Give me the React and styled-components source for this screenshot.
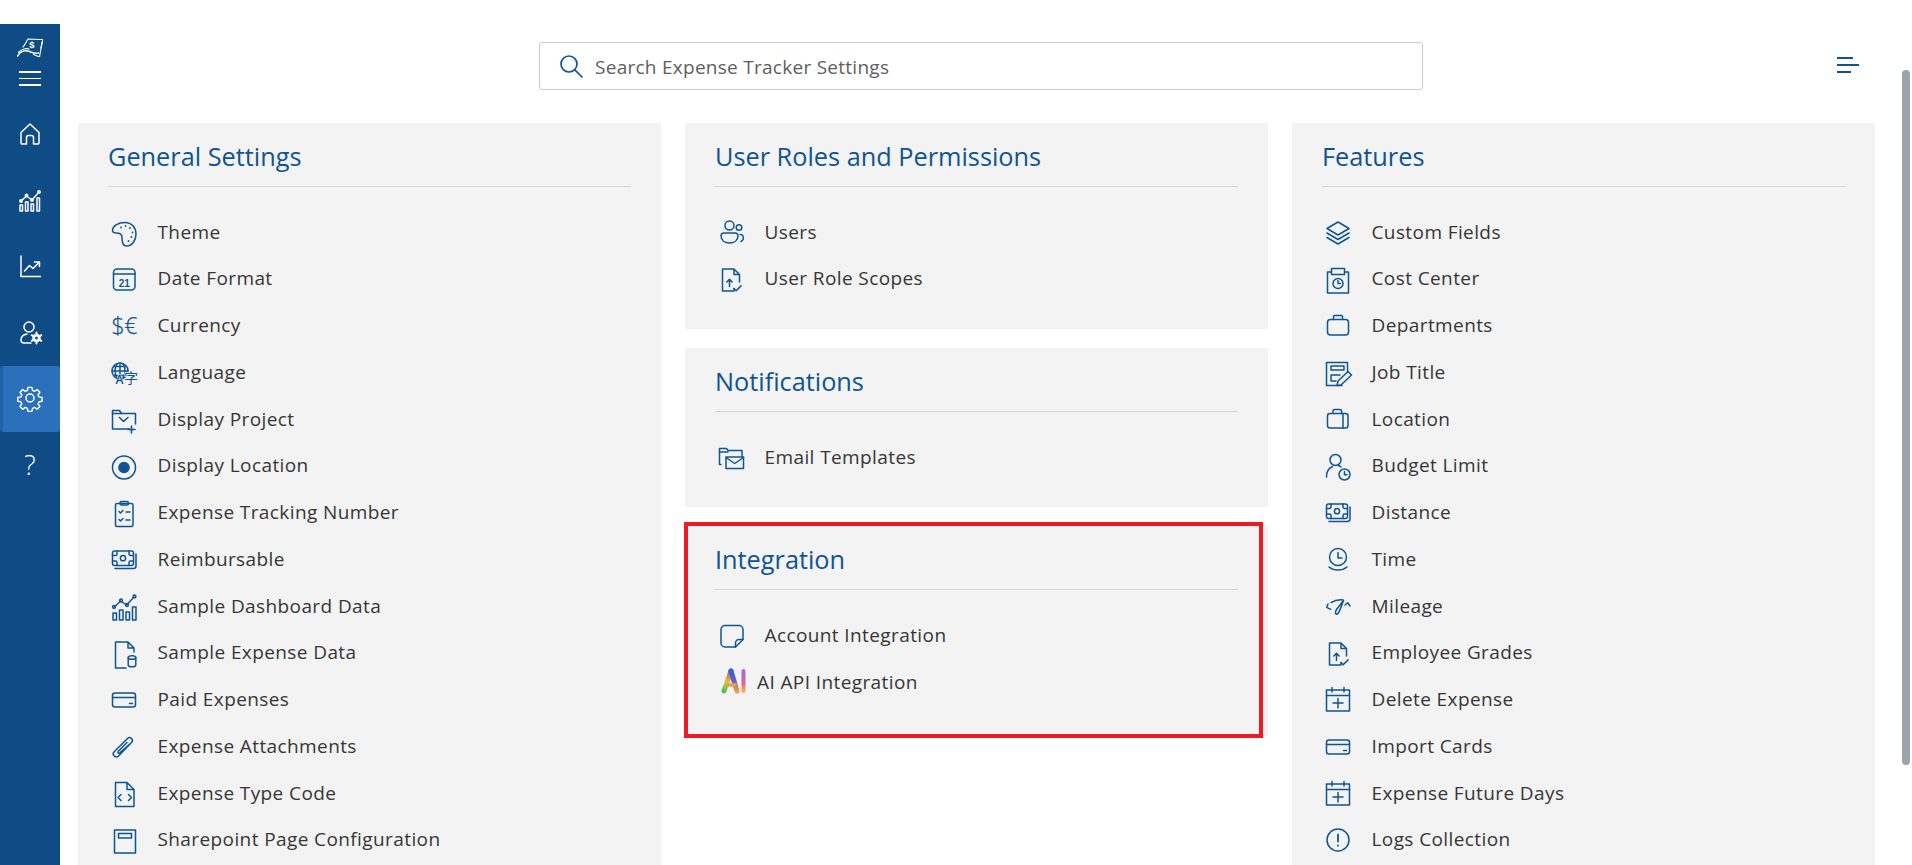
import React from 'react';
import styled, { createGlobalStyle } from 'styled-components';

const BLUE = '#0f5493';

const GlobalStyle = createGlobalStyle`
    html, body {
        margin: 0;
        padding: 0;
        height: 100%;
        background: #fff;
        overflow: hidden;
        font-family: "Open Sans", "Noto Sans", sans-serif;
    }
    * {
        box-sizing: border-box;
    }
`

// all list icons share a 32x32 box
const Svg = ({ children, size = 32, color = BLUE, width = 1.5 }) => (
    <svg width={size} height={size} viewBox="0 0 32 32" fill="none" stroke={color} strokeWidth={width} strokeLinecap="round" strokeLinejoin="round">
        {children}
    </svg>
);

const dots = (list, color = BLUE) => list.map(([x, y], i) => <circle key={i} cx={x} cy={y} r="0.9" fill={color} stroke="none" />);

const money = (
    <>
        <rect x="4.5" y="8" width="21" height="14.5" rx="2" />
        <path d="M28 11v12a2.5 2.5 0 0 1-2.5 2.5H7" />
        <circle cx="15" cy="15.2" r="2.6" />
        <path d="M4.5 12.5h3a1.5 1.5 0 0 0 1.5-1.5V8M25.5 12.5h-3A1.5 1.5 0 0 1 21 11V8M4.5 18h3A1.5 1.5 0 0 1 9 19.5v3M25.5 18h-3a1.5 1.5 0 0 0-1.5 1.5v3" />
    </>
);
const bars = (
    <>
        <path d="M5 30v-7h3.500v7zM11.500 30V20h3.500v10zM18 30v-8h3.500v8zM24.500 30V17H28v13z" />
        <path d="M6.500 17l6-6 6 4 7.500-8" />
        <circle cx="6" cy="17" r="1.400" />
        <circle cx="13" cy="10.500" r="1.400" />
        <circle cx="19" cy="15" r="1.400" />
        <circle cx="26.500" cy="6.500" r="1.400" />
    </>
);
const calendarPlus = (
    <>
        <rect x="4.500" y="7" width="23" height="21" />
        <path d="M4.500 12.500h23M10 4.500V9M22 4.500V9M16 15.500V25M11 20h10" />
    </>
);
const card = (
    <>
        <rect x="4.500" y="10" width="23" height="14" rx="2.500" />
        <path d="M4.500 14.500h23M21.500 20.500h3" />
    </>
);
const fileUp = (
    <>
        <path d="M19 25.500V28H7.500V6H19l5.500 5.500V19M19 6v5.500h5.500" />
        <path d="M14.500 23.500v-7M11.800 19l2.700-2.700 2.700 2.700M19 25.500l2.200 2.200 4.800-4.800" />
    </>
);

const icons = {
    palette: (
        <>
            <path d="M17 6.500C10 6.500 4.500 10 4.500 14.500c0 3.500 4 2.200 6.300 2.800s3.200 2 3.200 4.400.6 8.300 4.500 8.300c5.500 0 9.500-5.500 9.500-12S23.500 6.500 17 6.500z" />
            {dots([[13, 11.500], [17.500, 10], [22, 12], [24.500, 16.500], [23.500, 21], [20.500, 25]])}
        </>
    ),
    calendar: (
        <>
            <rect x="5.500" y="6" width="21.500" height="21" rx="3.500" />
            <path d="M5.500 11H27" />
            <text x="16.200" y="23.500" fontSize="10" fontWeight="700" fontFamily="Liberation Sans, sans-serif" fill={BLUE} stroke="none" textAnchor="middle">21</text>
        </>
    ),
    currency: (
        <text x="3.500" y="25" fontSize="23" letterSpacing="-0.5" fontWeight="300" fontFamily="Open Sans, sans-serif" fill={BLUE} stroke={BLUE} strokeWidth="0.25">$€</text>
    ),
    language: (
        <>
            <circle cx="12" cy="15" r="8" />
            <path d="M4 15h16M12 7v16M6 10.500h12M6 19.500h12M9 8c-2.500 4.500-2.500 10 0 14M15 8c2.500 4.500 2.500 10 0 14" />
            <text x="7.500" y="28" fontSize="12" fontWeight="600" fontFamily="Open Sans, sans-serif" fill={BLUE} stroke="#f3f3f3" strokeWidth="1" paintOrder="stroke">A</text>
            <text x="16" y="27" fontSize="14" fontFamily="Noto Sans CJK SC, sans-serif" fill={BLUE} stroke="#f3f3f3" strokeWidth="1.500" paintOrder="stroke">字</text>
        </>
    ),
    folder: (
        <>
            <path d="M27.500 21V10.500H13.500l-2-3h-7V26h17" />
            <path d="M4.500 10.500h9" />
            <path d="M11.500 14.500l4 4 4.500-4M23.500 23v7M20 26.500h7" strokeWidth="1.600" />
        </>
    ),
    target: (
        <>
            <circle cx="16" cy="17.500" r="11.500" strokeWidth="1.500" />
            <circle cx="16" cy="17.500" r="5.800" fill={BLUE} stroke="none" />
        </>
    ),
    clipboard: (
        <>
            <rect x="7.500" y="7.500" width="17.500" height="23" rx="1.500" />
            <rect x="12" y="5.500" width="8.500" height="3.500" rx="1.500" />
            <path d="M11 15.500l1.500 1.500 2.500-2.500M18 16h4M11 23.500l1.500 1.500 2.500-2.500M18 24h4" />
        </>
    ),
    money,
    bars,
    fileData: (
        <>
            <path d="M18 31H7.500V5H20l6 6v4M20 5v6h6" />
            <ellipse cx="24" cy="20.500" rx="3.800" ry="1.800" />
            <path d="M20.200 20.500V28c0 1 1.700 1.800 3.800 1.800s3.800-.8 3.800-1.800v-7.500" />
        </>
    ),
    card,
    clip: (
        <path d="M22.500 13.500L10.500 26a3 3 0 0 1-4.300-4.300L19.500 8.500a2.800 2.800 0 0 1 4 4L11.500 23a1 1 0 0 1-1.400-1.400L19 12.500" />
    ),
    fileCode: (
        <>
            <path d="M19 5.500H7.500v24H26v-17l-7-7zM19 5.500v7h7" />
            <path d="M13 17.500l-3 3 3 3M20.500 17.500l3 3-3 3" />
        </>
    ),
    page: (
        <>
            <rect x="6.500" y="6" width="21" height="23" />
            <rect x="10.500" y="9.500" width="13" height="4.500" />
        </>
    ),
    users: (
        <>
            <circle cx="14.500" cy="9.500" r="4.500" />
            <circle cx="24" cy="11.500" r="2.800" />
            <path d="M6 19.500A3 3 0 0 1 9 17h11a3 3 0 0 1 3 2.500c0 5-4 7.500-8.500 7.500S6 24.500 6 19.500z" />
            <path d="M26 25.500a4.500 4.500 0 0 0 2-5.500c-.4-1-1.500-1.500-3-1.500" />
        </>
    ),
    fileUp,
    mailFolder: (
        <>
            <path d="M6 23.500H4.500v-16h7l1.500 2h14v6" />
            <path d="M4.500 11H13" />
            <rect x="11" y="16" width="17.500" height="11.500" />
            <path d="M11 16.500l8.700 6 8.800-6" />
        </>
    ),
    note: (
        <>
            <path d="M20.500 28H10a4 4 0 0 1-4-4V10.500a4 4 0 0 1 4-4h14a4 4 0 0 1 4 4v10z" />
            <path d="M20.500 28v-4a3.500 3.500 0 0 1 3.500-3.500h4" />
        </>
    ),
    layers: (
        <>
            <path d="M16 6l11 6.500L16 19 5 12.500z" />
            <path d="M5 17l11 6.500L27 17M5 21.500L16 28l11-6.500" />
        </>
    ),
    costCenter: (
        <>
            <path d="M9 9H5.500v21h21V9H23" />
            <rect x="9.500" y="5.500" width="13" height="6" />
            <circle cx="16" cy="20.500" r="5" />
            <path d="M16 17.500v3h2.500" />
        </>
    ),
    briefcase: (
        <>
            <rect x="5.500" y="10.500" width="21" height="15.500" rx="3" />
            <path d="M11.500 10.500v-3a1 1 0 0 1 1-1h7a1 1 0 0 1 1 1v3" />
        </>
    ),
    jobTitle: (
        <>
            <path d="M20 29.500H4.500v-23h21v9" />
            <rect x="9" y="10" width="13" height="4" />
            <path d="M9 19h9M9 19v6h5" />
            <path d="M15 29.500l1-4.500 10-9.500 3.500 3.500L19 29z" />
        </>
    ),
    case: (
        <>
            <rect x="5.500" y="10.500" width="20.500" height="14.500" rx="2.500" />
            <path d="M11 10.500V8a1.500 1.500 0 0 1 1.500-1.500H18A1.500 1.500 0 0 1 19.500 8v2.500M21 10.500V25" />
        </>
    ),
    budget: (
        <>
            <circle cx="13.500" cy="10" r="5.500" />
            <path d="M4.500 27c0-5.500 2.500-9 6-10.500M16.500 15.500c1 .5 2 1 2.500 1.500" />
            <circle cx="22.500" cy="24.500" r="5.500" />
            <path d="M22.500 21.500v3.200H25" />
        </>
    ),
    time: (
        <>
            <circle cx="16" cy="14" r="8.500" />
            <path d="M16 9.500V15h4M7 24c5 4 13 4 18 0" />
        </>
    ),
    mileage: (
        <>
            <path d="M6 14l-1.300 3.300 4 2M9 12.700c4-2.500 8-3.200 12-2.700M23 15l2.700-2.300L28 16" />
            <path d="M21.500 10.500l-7 9c-2 3-1 5.500.8 4.500 1.500-.8 2-2.500 3-5z" />
        </>
    ),
    calendarPlus,
    alert: (
        <>
            <circle cx="16" cy="16" r="11" />
            <path d="M16 10.500v7M16 21.500v.3" strokeWidth="1.800" />
        </>
    ),
};

const SideLogo = () => (
    <svg width="26" height="20" viewBox="0 0 26 20" fill="none" stroke="#fff" strokeWidth="1.100" strokeLinecap="round" strokeLinejoin="round">
        <path d="M6 10c2-2 3-5 5-8 5 .2 10 .2 15 .5L24 11" />
        <path d="M25 5l-2.500 15-6-2.500" />
        <path d="M.5 19c3-5 8-6 12-4.500s6 2.500 9 1.500" strokeWidth="1.500" />
        <path d="M1.500 15.500c2.500-3 7-4.500 10.500-3.500" strokeWidth="1.300" />
        <text x="15" y="10.500" fontSize="9.500" fontWeight="700" fontFamily="Liberation Sans, sans-serif" fill="#fff" stroke="none" textAnchor="middle">$</text>
    </svg>
);

const sideIcons = {
    home: (
        <path d="M5 12.500L14 4l9 8.500V23a1 1 0 0 1-1 1h-4.500v-6.500a2 2 0 0 0-2-2h-3a2 2 0 0 0-2 2V24H6a1 1 0 0 1-1-1z" />
    ),
    dash: (
        <>
            <path d="M4 25v-6h2.500v6zM9.500 25v-9H12v9zM15 25v-7h2.500v7zM21 25V12h2.500v13z" />
            <path d="M5 15l5.500-5 5.500 4 6.500-7.500" />
            <circle cx="5" cy="15" r="1.200" />
            <circle cx="10.500" cy="9.500" r="1.200" />
            <circle cx="16" cy="14" r="1.200" />
            <circle cx="23" cy="6" r="1.200" />
        </>
    ),
    trend: (
        <path d="M5 4v20.500h19.500M8.500 19l5-5.500 3.500 3 6.500-6.500M18.500 10h5v4.500" />
    ),
    userGear: (
        <>
            <circle cx="13" cy="9" r="5" />
            <path d="M15 25H8a3 3 0 0 1-3-3c0-3.500 3-5.500 6-6" />
            <circle cx="20.500" cy="20" r="3.500" fill="#fff" stroke="#fff" strokeWidth="1.500" />
            <path d="M20.500 14.500v11M15.700 17.200l9.600 5.600M15.700 22.800l9.600-5.600" strokeWidth="2" />
            <circle cx="20.500" cy="20" r="1.500" fill="#0f4c85" stroke="none" />
        </>
    ),
    gear: (
        <g transform="translate(0 -1)">
            <circle cx="14" cy="14" r="4" />
            <path d="M12 3.500h4l.7 3.200 2 .9 2.800-1.800 2.800 2.800-1.800 2.800.9 2 3.200.7v3.800l-3.200.7-.9 2 1.800 2.800-2.800 2.800-2.800-1.800-2 .9-.7 3.200h-4l-.7-3.200-2-.9-2.800 1.800-2.800-2.800 1.800-2.800-.9-2-3.200-.7v-3.800l3.200-.7.9-2-1.800-2.800 2.800-2.800 2.800 1.800 2-.9z" transform="translate(0.500 0) scale(0.96)" />
        </g>
    ),
};

const general = [
    ['palette', 'Theme'],
    ['calendar', 'Date Format'],
    ['currency', 'Currency'],
    ['language', 'Language'],
    ['folder', 'Display Project'],
    ['target', 'Display Location'],
    ['clipboard', 'Expense Tracking Number'],
    ['money', 'Reimbursable'],
    ['bars', 'Sample Dashboard Data'],
    ['fileData', 'Sample Expense Data'],
    ['card', 'Paid Expenses'],
    ['clip', 'Expense Attachments'],
    ['fileCode', 'Expense Type Code'],
    ['page', 'Sharepoint Page Configuration'],
];

const features = [
    ['layers', 'Custom Fields'],
    ['costCenter', 'Cost Center'],
    ['briefcase', 'Departments'],
    ['jobTitle', 'Job Title'],
    ['case', 'Location'],
    ['budget', 'Budget Limit'],
    ['money', 'Distance'],
    ['time', 'Time'],
    ['mileage', 'Mileage'],
    ['fileUp', 'Employee Grades'],
    ['calendarPlus', 'Delete Expense'],
    ['card', 'Import Cards'],
    ['calendarPlus', 'Expense Future Days'],
    ['alert', 'Logs Collection'],
];

function SettingRow({ icon, label }) {
    return (
        <Row>
            <IconBox><Svg>{icons[icon]}</Svg></IconBox>
            <RowLabel>{label}</RowLabel>
        </Row>
    );
}

function AiLogo() {
    return (
        <svg width="32" height="32" viewBox="0 0 32 32" fill="none" strokeWidth="5" strokeLinecap="round" strokeLinejoin="round">
            <defs>
                <linearGradient id="aiLeft" gradientUnits="userSpaceOnUse" x1="9" y1="25" x2="16" y2="5">
                    <stop offset="0" stopColor="#5cb85c" />
                    <stop offset="0.45" stopColor="#d8c544" />
                    <stop offset="0.7" stopColor="#e98a3c" />
                    <stop offset="1" stopColor="#3f6fd8" />
                </linearGradient>
                <linearGradient id="aiRight" gradientUnits="userSpaceOnUse" x1="16" y1="5" x2="22" y2="25">
                    <stop offset="0" stopColor="#3560d0" />
                    <stop offset="0.5" stopColor="#6a5bd0" />
                    <stop offset="1" stopColor="#f0a040" />
                </linearGradient>
                <linearGradient id="aiI" gradientUnits="userSpaceOnUse" x1="28" y1="5" x2="28" y2="25">
                    <stop offset="0" stopColor="#9a6fe0" />
                    <stop offset="0.6" stopColor="#e0609a" />
                    <stop offset="1" stopColor="#f5b052" />
                </linearGradient>
            </defs>
            <path d="M9 25L16 5" stroke="url(#aiLeft)" />
            <path d="M16 5l6 20" stroke="url(#aiRight)" />
            <path d="M13 19h7" stroke="#e5a24a" strokeWidth="3.500" />
            <path d="M28.500 5v20" stroke="url(#aiI)" strokeWidth="4" />
        </svg>
    );
}

function App() {
    return (
        <Page>
            <GlobalStyle />
            <Sidebar>
                <Brand>
                    <SideLogo />
                    <Hamburger><span /><span /><span /></Hamburger>
                </Brand>
                <Nav>
                    {Object.keys(sideIcons).map((key) => (
                        <NavItem key={key} $active={key === 'gear'}>
                            <svg width="28" height="28" viewBox="0 0 28 28" fill="none" stroke="#fff" strokeWidth="1.500" strokeLinecap="round" strokeLinejoin="round">
                                {sideIcons[key]}
                            </svg>
                        </NavItem>
                    ))}
                    <NavItem><Question>?</Question></NavItem>
                </Nav>
            </Sidebar>

            <Main>
                <Toolbar>
                    <SearchBox>
                        <svg width="26" height="26" viewBox="0 0 26 26" fill="none" stroke={BLUE} strokeWidth="1.700" strokeLinecap="round">
                            <circle cx="11" cy="11" r="8" />
                            <path d="M16.800 16.800L24 24" />
                        </svg>
                        <SearchText>Search Expense Tracker Settings</SearchText>
                    </SearchBox>
                    <ListButton>
                        <ListLine $w={16} />
                        <ListLine $w={22} />
                        <ListLine $w={14} />
                    </ListButton>
                </Toolbar>

                <Columns>
                    <Card>
                        <CardTitle>General Settings</CardTitle>
                        <List>
                            {general.map(([icon, label]) => <SettingRow key={label} icon={icon} label={label} />)}
                        </List>
                    </Card>

                    <Stack>
                        <Card>
                            <CardTitle>User Roles and Permissions</CardTitle>
                            <List>
                                <SettingRow icon="users" label="Users" />
                                <SettingRow icon="fileUp" label="User Role Scopes" />
                            </List>
                        </Card>
                        <Card>
                            <CardTitle>Notifications</CardTitle>
                            <List>
                                <SettingRow icon="mailFolder" label="Email Templates" />
                            </List>
                        </Card>
                        <Card $extra>
                            <CardTitle>Integration</CardTitle>
                            <List>
                                <SettingRow icon="note" label="Account Integration" />
                                <Row>
                                    <IconBox $tight><AiLogo /></IconBox>
                                    <RowLabel>AI API Integration</RowLabel>
                                </Row>
                            </List>
                            <Highlight />
                        </Card>
                    </Stack>

                    <Card>
                        <CardTitle>Features</CardTitle>
                        <List>
                            {features.map(([icon, label]) => <SettingRow key={label} icon={icon} label={label} />)}
                        </List>
                    </Card>
                </Columns>
            </Main>

            <ScrollThumb />
        </Page>
    );
}

export default App

const Page = styled.div`
    position: relative;
    display: flex;
    height: 865px;
    overflow: hidden;
    background: #fff;
`
const Sidebar = styled.aside`
    flex: 0 0 60px;
    margin-top: 24px;
    background: #0f4c85;
`
const Brand = styled.div`
    display: flex;
    flex-direction: column;
    align-items: center;
    height: 77px;
    padding-top: 13px;
`
const Hamburger = styled.div`
    display: flex;
    flex-direction: column;
    gap: 5.2px;
    margin-top: 14px;
    span {
        display: block;
        width: 22px;
        height: 1.5px;
        background: #fff;
    }
`
const Nav = styled.nav`
    display: flex;
    flex-direction: column;
`
const NavItem = styled.div`
    display: flex;
    align-items: center;
    justify-content: center;
    height: 66px;
    ${(p) => p.$active && `
        background: #2a70ba;
        border-left: 3px solid #1f62a8;
        border-radius: 3px;
        padding-right: 3px;
        margin-top: 1px;
        margin-bottom: -1px;
    `}
`
const Question = styled.span`
    color: #fff;
    font-size: 27px;
    font-weight: 300;
`
const Main = styled.main`
    flex: 1;
    min-width: 0;
    padding: 42px 37px 0 18px;
`
const Toolbar = styled.div`
    display: flex;
    align-items: center;
    padding-left: 461px;
    height: 48px;
`
const SearchBox = styled.div`
    display: flex;
    align-items: center;
    gap: 11px;
    width: 884px;
    height: 48px;
    padding: 0 18px;
    border: 1px solid #ccc;
    border-radius: 3px;
`
const SearchText = styled.span`
    color: #5e5e5e;
    font-size: 19px;
    letter-spacing: 0.27px;
    margin-top: 2px;
`
const ListButton = styled.div`
    display: flex;
    flex-direction: column;
    gap: 5.2px;
    margin-left: auto;
    margin-right: 16px;
    margin-top: -2px;
    width: 22px;
`
const ListLine = styled.i`
    display: block;
    width: ${(p) => p.$w}px;
    height: 1.8px;
    background: ${BLUE};
`
const Columns = styled.div`
    display: grid;
    grid-template-columns: repeat(3, 583px);
    gap: 24px;
    align-items: start;
    margin-top: 33px;
`
const Stack = styled.div`
    display: flex;
    flex-direction: column;
    gap: 19px;
`
const Card = styled.section`
    position: relative;
    padding: 0 30px 27px;
    background: #f3f3f3;
    ${(p) => p.$extra && `padding-bottom: 31px;`}
`
const CardTitle = styled.h2`
    display: flex;
    align-items: center;
    height: 64px;
    margin: 0;
    padding-top: 3px;
    border-bottom: 1.5px solid #d6d6d6;
    color: ${BLUE};
    font-size: 25.3px;
    font-weight: 400;
`
const List = styled.div`
    padding-top: 21.5px;
`
const Row = styled.div`
    display: flex;
    align-items: center;
    height: 46.75px;
`
const IconBox = styled.span`
    display: flex;
    flex: 0 0 32px;
    margin-right: ${(p) => (p.$tight ? '10px' : '17.5px')};
`
const RowLabel = styled.span`
    color: #363636;
    font-size: 19px;
    letter-spacing: 0.4px;
    margin-bottom: 0.5px;
`
const Highlight = styled.div`
    position: absolute;
    left: -1px;
    top: -4px;
    right: 5px;
    bottom: -2px;
    border: 4px solid #ed1c24;
`
const ScrollThumb = styled.div`
    position: absolute;
    top: 70px;
    right: 2px;
    width: 8px;
    height: 695px;
    border-radius: 4px;
    background: #9aa5ae;
`
